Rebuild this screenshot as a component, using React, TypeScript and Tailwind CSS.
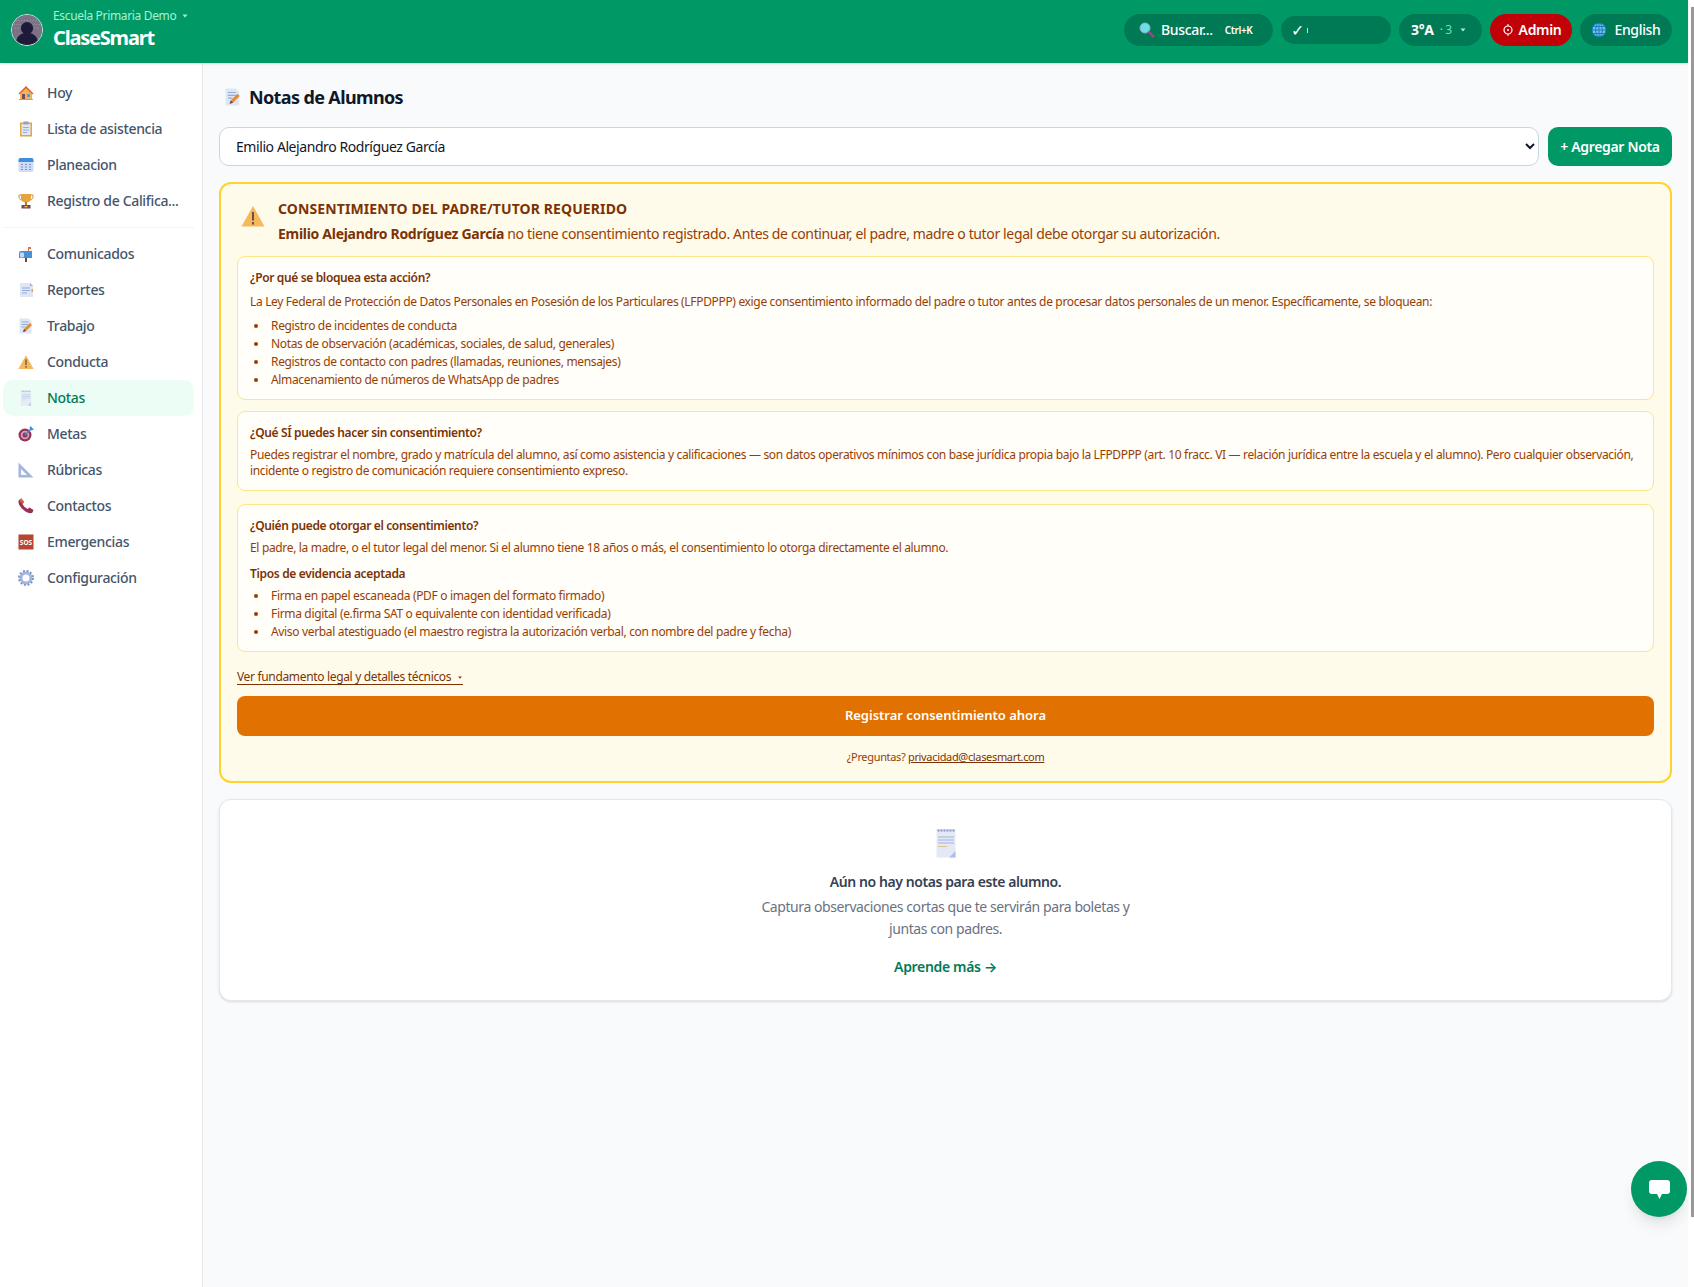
import type { ReactNode } from "react";

// small flat pictures standing in for the emoji of the real page
const House = () => (
  <svg viewBox="0 0 16 16" className="h-4 w-4">
    <path d="M2 8 8 2l6 6v6H2z" fill="#f2b35c" />
    <path d="M0.5 8.5 8 1l7.5 7.5-1 1L8 3.2 1.5 9.5z" fill="#d9662b" />
    <rect x="4" y="9" width="3" height="5" fill="#7a4b52" />
    <rect x="9" y="9" width="3" height="3" fill="#4aa3e0" />
    <rect x="1" y="14" width="14" height="1" fill="#5ecb9a" />
  </svg>
);
const Clipboard = () => (
  <svg viewBox="0 0 16 16" className="h-4 w-4">
    <rect x="2" y="1.5" width="12" height="14" fill="#e8a33d" />
    <rect x="3.5" y="3" width="9" height="11" fill="#dfe7f5" />
    <rect x="5.5" y="0.5" width="5" height="3" fill="#9aa3ad" />
    <path d="M5 6.5h6M5 9h6M5 11.5h4" stroke="#8fb0dc" />
  </svg>
);
const Calendar = () => (
  <svg viewBox="0 0 16 16" className="h-4 w-4">
    <rect x="0.5" y="1" width="15" height="14" rx="2" fill="#cfdcf3" />
    <path d="M0.5 5V3a2 2 0 0 1 2-2h11a2 2 0 0 1 2 2v2z" fill="#3f8fdc" />
    <path d="M3 7.5h2M7 7.5h2M11 7.5h2M3 10h2M7 10h2M11 10h2M3 12.5h2M7 12.5h2M11 12.5h2" stroke="#7f93c4" />
  </svg>
);
const Trophy = () => (
  <svg viewBox="0 0 16 16" className="h-4 w-4">
    <path d="M3 2H1v2c0 2 1.5 3 3 3M13 2h2v2c0 2-1.500 3-3 3" fill="none" stroke="#d98f2e" />
    <path d="M3 1h10v4c0 3-2.500 4.500-5 4.500S3 8 3 5z" fill="#e8a33d" />
    <rect x="7" y="9" width="2" height="3" fill="#b87a2a" />
    <rect x="3.500" y="12" width="9" height="3.500" fill="#6f4a58" />
    <rect x="6.500" y="13" width="3" height="1.300" fill="#f0c04a" />
  </svg>
);
const Mailbox = () => (
  <svg viewBox="0 0 16 16" className="h-4 w-4">
    <path d="M3 5h11v7H1V7a2 2 0 0 1 2-2z" fill="#4a90d6" />
    <rect x="2" y="6.500" width="4" height="5" rx="1" fill="#c7d8ef" />
    <rect x="7" y="12" width="2" height="4" fill="#5a4a55" />
    <path d="M10 6V1h3v2h-2v3z" fill="#e0703a" />
  </svg>
);
const Report = () => (
  <svg viewBox="0 0 16 16" className="h-4 w-4">
    <path d="M2 1h10l3 3v11H2z" fill="#dfe5f2" />
    <path d="M12 1v3h3z" fill="#9fb1d6" />
    <path d="M4 6h8M4 8.500h8M4 11h5" stroke="#8fb0dc" />
    <rect x="13.500" y="7" width="1.500" height="3" fill="#e8a33d" />
  </svg>
);
const Memo = ({ className = "h-4 w-4" }: { className?: string }) => (
  <svg viewBox="0 0 16 16" className={className}>
    <path d="M1.500 0.500h9l3 3v12h-12z" fill="#dfe5f2" />
    <path d="M3.500 4h7M3.500 6.500h7M3.500 9h4" stroke="#8fb0dc" />
    <path d="M5 14l1-3 6-6 2 2-6 6z" fill="#ea8a2e" />
    <path d="M5 14l1-3 2 2z" fill="#5a4a55" />
  </svg>
);
const Warning = ({ className = "h-4 w-4" }: { className?: string }) => (
  <svg viewBox="0 0 24 22" className={className}>
    <path d="M12 1 23.500 21.500H0.500z" fill="#f5b85c" />
    <rect x="11" y="7" width="2" height="8.500" fill="#6b5148" />
    <rect x="11" y="17" width="2" height="2.500" fill="#6b5148" />
  </svg>
);
const Notepad = ({ className = "h-4 w-4" }: { className?: string }) => (
  <svg viewBox="0 0 20 30" className={className}>
    <rect x="0.500" y="1" width="19" height="28.500" fill="#e4e9f5" />
    <path d="M1.500 2.500h17" stroke="#8c9bc7" strokeWidth="2" strokeDasharray="2 1" />
    <path d="M2 9h16M2 12h16M2 15h16" stroke="#9fb4e2" />
    <path d="M2 18.500h9" stroke="#d8c48a" />
    <path d="M13 29.500 19.500 23v6.500z" fill="#a9c2ea" />
  </svg>
);
const Target = () => (
  <svg viewBox="0 0 16 16" className="h-4 w-4">
    <circle cx="7" cy="9" r="6.500" fill="#9c2f55" />
    <circle cx="7" cy="9" r="4.300" fill="#c9a6c0" />
    <circle cx="7" cy="9" r="2.500" fill="#9c2f55" />
    <path d="M7 9 13 3" stroke="#3f8fdc" strokeWidth="1.500" />
    <path d="M11.500 1.500 13 0l1 2 2 1-2 1.500-2-.5z" fill="#3f8fdc" />
  </svg>
);
const SetSquare = () => (
  <svg viewBox="0 0 16 16" className="h-4 w-4">
    <path fillRule="evenodd" d="M0.500 0.500 15.500 15.500H0.500zM3 7v6h6z" fill="#a3b6df" />
  </svg>
);
const Phone = () => (
  <svg viewBox="0 0 16 16" className="h-4 w-4">
    <path d="M1 2 3.500 0.500 6 4 4.500 6c1 2 3 4 5 5l2-1.500 4 2.500-1 2.500c-1 1-3 1-5 0C5 12.500 1 8 0.500 4.500 0.500 3.500 0.500 2.500 1 2z" fill="#9c2f55" />
    <path d="M1 2 3.500 0.500 6 4 4.500 6z" fill="#d9662b" />
  </svg>
);
const Sos = () => (
  <svg viewBox="0 0 16 16" className="h-4 w-4">
    <rect x="0.500" y="0.500" width="15" height="15" fill="#b8452f" />
    <text x="8" y="10.500" textAnchor="middle" fontSize="6.500" fontWeight="700" fill="white" letterSpacing="0">SOS</text>
  </svg>
);
const Gear = () => (
  <svg viewBox="0 0 16 16" className="h-4 w-4">
    <circle cx="8" cy="8" r="5" fill="none" stroke="#a3b6df" strokeWidth="3" />
    <circle cx="8" cy="8" r="7" fill="none" stroke="#7f93c4" strokeWidth="2" strokeDasharray="2 1.700" />
    <circle cx="8" cy="8" r="2" fill="#fff" />
  </svg>
);
const Magnifier = () => (
  <svg viewBox="0 0 16 16" className="h-4 w-4">
    <circle cx="6" cy="6" r="5" fill="#6fdde6" stroke="#8fb0d0" />
    <path d="M9.500 9.500 15 15" stroke="#8a4f7d" strokeWidth="2.600" />
  </svg>
);
const Globe = () => (
  <svg viewBox="0 0 16 16" className="h-4 w-4" fill="none" stroke="#0f6fb4" strokeWidth="0.800">
    <circle cx="8" cy="8" r="7" fill="#6cc0ea" />
    <ellipse cx="8" cy="8" rx="3.300" ry="7" />
    <path d="M1 8h14M2 4.500h12M2 11.500h12M8 1v14" />
  </svg>
);
const Caret = ({ className }: { className: string }) => (
  <svg viewBox="0 0 6 4" className={`h-1 w-[6px] ${className}`}>
    <path d="M0.500 0.500h5L3 3.500z" fill="currentColor" />
  </svg>
);
const Avatar = () => (
  <svg viewBox="0 0 32 32" className="h-8 w-8 rounded-full border border-[#e2e2e8]">
    <rect width="32" height="32" fill="#7b7385" />
    <path d="M2 10h28M4 6h24M3 14h26" stroke="#a9a2b0" strokeDasharray="1 2" />
    <circle cx="16" cy="14" r="6.500" fill="#1e1b3a" />
    <path d="M4 32c0-9 5-13 12-13s12 4 12 13z" fill="#1e1b3a" />
  </svg>
);

const firstNav: [string, ReactNode][] = [
  ["Hoy", <House />],
  ["Lista de asistencia", <Clipboard />],
  ["Planeacion", <Calendar />],
  ["Registro de Califica...", <Trophy />],
];

const secondNav: [string, ReactNode][] = [
  ["Comunicados", <Mailbox />],
  ["Reportes", <Report />],
  ["Trabajo", <Memo />],
  ["Conducta", <Warning />],
  ["Notas", <Notepad />],
  ["Metas", <Target />],
  ["Rúbricas", <SetSquare />],
  ["Contactos", <Phone />],
  ["Emergencias", <Sos />],
  ["Configuración", <Gear />],
];

function NavItem({ label, icon }: { label: string; icon: ReactNode }) {
  const active = label === "Notas";
  return (
    <div className={`flex h-9 items-center gap-[13px] rounded-[10px] pl-[15px] text-sm font-medium ${active ? "bg-emerald-50 text-emerald-700" : "text-slate-600"}`}>
      <span className={`flex w-4 justify-center ${active ? "opacity-80" : ""}`}>{icon}</span>
      {label}
    </div>
  );
}

function Bullets({ items }: { items: string[] }) {
  return (
    <ul className="leading-[18px]">
      {items.map((item) => (
        <li key={item} className="flex items-center">
          <span className="ml-1 mr-[13px] h-1 w-1 shrink-0 rounded-full bg-amber-800" />
          {item}
        </li>
      ))}
    </ul>
  );
}

export default function App() {
  return (
    <div className="flex h-[1287px] overflow-hidden bg-white font-['Noto_Sans',sans-serif] tracking-[-0.021em]">
      <div className="flex min-w-0 flex-1 flex-col bg-slate-50">
        <header className="z-10 flex h-[63px] shrink-0 items-center bg-emerald-600 pb-[3px] pl-[11px] pr-4 shadow-sm">
          <Avatar />
          <div className="ml-[10px] flex flex-col">
            <div className="flex items-center gap-[6px] text-xs leading-4 text-emerald-200">
              Escuela Primaria Demo
              <Caret className="" />
            </div>
            <div className="text-xl font-bold leading-7 tracking-[-1.2px] text-white">ClaseSmart</div>
          </div>
          <div className="ml-auto flex items-center gap-2 text-white">
            <div className="flex h-8 w-[149px] items-center rounded-full bg-emerald-700 pl-[15px] text-sm font-medium">
              <Magnifier />
              <span className="ml-[6px]">Buscar...</span>
              <span className="ml-3 text-[10px] font-semibold">Ctrl+K</span>
            </div>
            <div className="flex h-7 w-[110px] items-center rounded-full bg-emerald-700 pl-[10px] text-base">
              ✓
              <span className="ml-[3px] h-[5px] w-px bg-emerald-200" />
            </div>
            <div className="flex h-8 w-[83px] items-center rounded-full bg-emerald-700 pl-3 text-sm font-bold">
              3°A
              <span className="ml-[6px] text-xs font-normal text-emerald-300">· 3</span>
              <Caret className="ml-[8px] text-emerald-200" />
            </div>
            <div className="flex h-8 w-[82px] items-center justify-center gap-1 rounded-full bg-red-700 text-sm font-semibold">
              <svg viewBox="0 0 14 14" className="h-[14px] w-[14px]" fill="none" stroke="white">
                <circle cx="7" cy="7" r="4" strokeWidth="1.200" />
                <circle cx="7" cy="7" r="1" fill="white" stroke="none" />
                <path d="M7 1v2M7 11v2" strokeWidth="1" />
              </svg>
              Admin
            </div>
            <div className="flex h-8 w-[92px] items-center justify-center gap-[7px] rounded-full bg-emerald-700 text-sm font-medium">
              <Globe />
              English
            </div>
          </div>
        </header>

        <div className="flex min-h-0 flex-1">
          <aside className="w-[203px] shrink-0 border-r border-gray-200 bg-white pl-[3px] pr-2 pt-3">
            {firstNav.map(([label, icon]) => (
              <NavItem key={label} label={label} icon={icon} />
            ))}
            <div className="my-2 h-px bg-slate-100" />
            {secondNav.map(([label, icon]) => (
              <NavItem key={label} label={label} icon={icon} />
            ))}
          </aside>

          <main className="min-w-0 flex-1 px-4 pt-5">
            <div className="flex h-7 items-center gap-[7px]">
              <span className="flex w-[23px] justify-center pl-[5px]"><Memo className="h-[18px] w-[18px]" /></span>
              <h1 className="text-lg font-bold tracking-[-0.035em] text-gray-900">Notas de Alumnos</h1>
            </div>

            <div className="mt-4 flex gap-[9px]">
              <select className="h-[39px] flex-1 rounded-[10px] border border-slate-300 bg-white pl-3 pr-[3px] text-sm tracking-[-0.03em] text-gray-900">
                <option>Emilio Alejandro Rodríguez García</option>
              </select>
              <button className="h-[39px] w-[124px] rounded-[10px] bg-emerald-600 text-sm font-semibold text-white">+ Agregar Nota</button>
            </div>

            <section className="mt-4 rounded-xl border-2 border-amber-300 bg-amber-50 px-4 pb-4 pt-[15px] text-amber-800">
              <div className="flex gap-[13px]">
                <Warning className="ml-[4px] mt-[6px] h-[22px] w-6 shrink-0" />
                <div>
                  <h2 className="text-sm font-bold leading-5 tracking-[0.1px] text-amber-900">CONSENTIMIENTO DEL PADRE/TUTOR REQUERIDO</h2>
                  <p className="mt-[5px] text-sm leading-5 tracking-[-0.026em]">
                    <strong className="tracking-[-0.021em] text-amber-900">Emilio Alejandro Rodríguez García</strong> no tiene consentimiento registrado. Antes de continuar, el padre, madre o tutor legal debe otorgar su autorización.
                  </p>
                </div>
              </div>

              <div className="mt-3 rounded-lg border border-amber-200 bg-white/70 px-3 pb-[10px] pt-[13px] text-xs">
                <h3 className="font-semibold leading-4 tracking-[-0.03em] text-amber-900">¿Por qué se bloquea esta acción?</h3>
                <p className="mt-2 leading-4">
                  La Ley Federal de Protección de Datos Personales en Posesión de los Particulares (LFPDPPP) exige consentimiento informado del padre o tutor antes de procesar datos personales de un menor. Específicamente, se bloquean:
                </p>
                <div className="mt-[7px]"><Bullets items={["Registro de incidentes de conducta", "Notas de observación (académicas, sociales, de salud, generales)", "Registros de contacto con padres (llamadas, reuniones, mensajes)", "Almacenamiento de números de WhatsApp de padres"]} /></div>
              </div>

              <div className="mt-[11px] rounded-lg border border-amber-200 bg-white/70 px-3 pb-[11px] pt-[13px] text-xs">
                <h3 className="font-semibold leading-4 tracking-[-0.03em] text-amber-900">¿Qué SÍ puedes hacer sin consentimiento?</h3>
                <p className="mt-[6px] leading-4">
                  Puedes registrar el nombre, grado y matrícula del alumno, así como asistencia y calificaciones — son datos operativos mínimos con base jurídica propia bajo la LFPDPPP (art. 10 fracc. VI — relación jurídica entre la escuela y el alumno). Pero cualquier observación, incidente o registro de comunicación requiere consentimiento expreso.
                </p>
              </div>

              <div className="mt-[13px] rounded-lg border border-amber-200 bg-white/70 px-3 pb-[10px] pt-[13px] text-xs">
                <h3 className="font-semibold leading-4 tracking-[-0.03em] text-amber-900">¿Quién puede otorgar el consentimiento?</h3>
                <p className="mt-[6px] leading-4">
                  El padre, la madre, o el tutor legal del menor. Si el alumno tiene 18 años o más, el consentimiento lo otorga directamente el alumno.
                </p>
                <h4 className="mt-[10px] font-semibold leading-4 text-amber-900">Tipos de evidencia aceptada</h4>
                <div className="mt-[5px]"><Bullets items={["Firma en papel escaneada (PDF o imagen del formato firmado)", "Firma digital (e.firma SAT o equivalente con identidad verificada)", "Aviso verbal atestiguado (el maestro registra la autorización verbal, con nombre del padre y fecha)"]} /></div>
              </div>

              <div className="mt-[18px] flex items-center gap-[6px] text-xs leading-4 text-amber-900">
                <span className="flex items-center gap-[6px] border-b border-amber-900 leading-[14px]">
                  Ver fundamento legal y detalles técnicos
                  <Caret className="h-[3px] w-1" />
                </span>
              </div>
              <button className="mt-[11px] h-10 w-full rounded-lg bg-amber-600 text-[13px] font-semibold tracking-normal text-white">Registrar consentimiento ahora</button>
              <p className="mt-[13px] text-center text-[11px] leading-4">
                ¿Preguntas? <span className="text-amber-900 underline">privacidad@clasesmart.com</span>
              </p>
            </section>

            <section className="mt-4 flex h-[202px] flex-col items-center rounded-xl border border-gray-200 bg-white pt-7 shadow-sm">
              <Notepad className="h-[30px] w-5" />
              <h3 className="mt-[14px] text-sm font-semibold leading-5 tracking-[-0.03em] text-gray-700">Aún no hay notas para este alumno.</h3>
              <p className="mt-1 w-[384px] text-center text-sm leading-[22px] tracking-[-0.03em] text-gray-500">Captura observaciones cortas que te servirán para boletas y juntas con padres.</p>
              <div className="mt-[17px] text-sm font-semibold leading-5 text-emerald-700">
                Aprende más <span className="font-['Inter',sans-serif]">→</span>
              </div>
            </section>
          </main>
        </div>
      </div>

      {/* thin page scrollbar */}
      <div className="flex w-[6px] shrink-0 flex-col items-end bg-white pt-[7px]">
        <div className="h-[1210px] w-[3px] bg-[#999999]" />
      </div>

      <button className="fixed left-[1631px] top-[1161px] flex h-14 w-14 items-center justify-center rounded-full bg-emerald-600 shadow-lg">
        <svg viewBox="0 0 21 19" className="h-[19px] w-[21px]">
          <path d="M3 0h15a3 3 0 0 1 3 3v8a3 3 0 0 1-3 3h-5l-2.500 5L8 14H3a3 3 0 0 1-3-3V3a3 3 0 0 1 3-3z" fill="white" />
        </svg>
      </button>
    </div>
  );
}
